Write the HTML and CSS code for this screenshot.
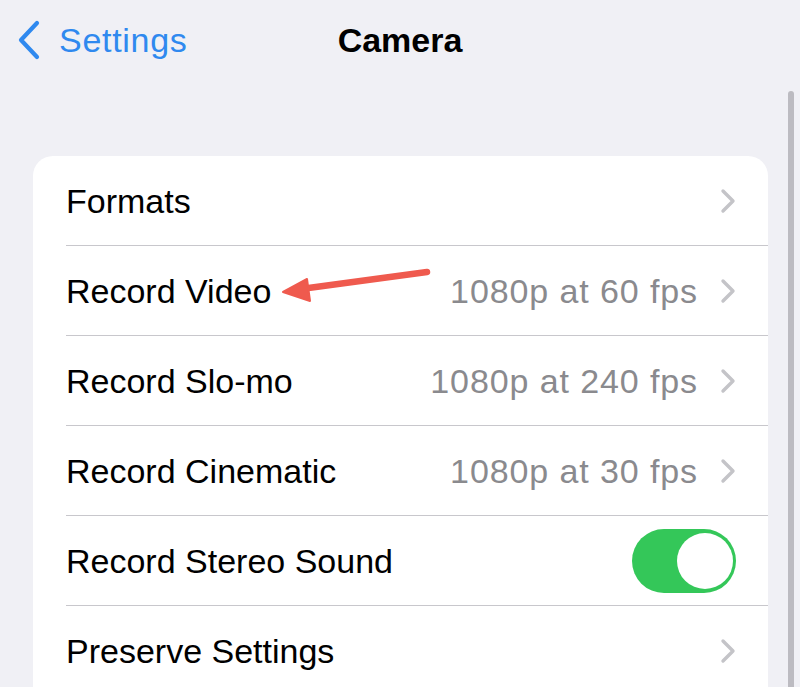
FILE: index.html
```html
<!DOCTYPE html>
<html>
<head>
<meta charset="utf-8">
<link rel="stylesheet" href="styles.css">
</head>
<body>
<div class="page">
  <header class="nav">
    <div class="back">
      <svg class="back-icon" width="26" height="40" viewBox="0 0 26 40"><path d="M21 3 L5 20 L21 37" fill="none" stroke="#2f89ef" stroke-width="4.2" stroke-linecap="round" stroke-linejoin="round"/></svg>
      <span class="back-label">Settings</span>
    </div>
    <div class="title">Camera</div>
  </header>
  <main class="card">
    <div class="row"><span class="label">Formats</span><span class="right"><svg class="chev" width="16" height="26" viewBox="0 0 16 26"><path d="M3 3 L13 13 L3 23" fill="none" stroke="#c4c4c8" stroke-width="3.4" stroke-linecap="round" stroke-linejoin="round"/></svg></span></div>
    <div class="row"><span class="label">Record Video</span><span class="right"><span class="value">1080p at 60 fps</span><svg class="chev" width="16" height="26" viewBox="0 0 16 26"><path d="M3 3 L13 13 L3 23" fill="none" stroke="#c4c4c8" stroke-width="3.4" stroke-linecap="round" stroke-linejoin="round"/></svg></span></div>
    <div class="row"><span class="label">Record Slo-mo</span><span class="right"><span class="value">1080p at 240 fps</span><svg class="chev" width="16" height="26" viewBox="0 0 16 26"><path d="M3 3 L13 13 L3 23" fill="none" stroke="#c4c4c8" stroke-width="3.4" stroke-linecap="round" stroke-linejoin="round"/></svg></span></div>
    <div class="row"><span class="label">Record Cinematic</span><span class="right"><span class="value">1080p at 30 fps</span><svg class="chev" width="16" height="26" viewBox="0 0 16 26"><path d="M3 3 L13 13 L3 23" fill="none" stroke="#c4c4c8" stroke-width="3.4" stroke-linecap="round" stroke-linejoin="round"/></svg></span></div>
    <div class="row"><span class="label">Record Stereo Sound</span><span class="right"><span class="toggle"><span class="knob"></span></span></span></div>
    <div class="row"><span class="label">Preserve Settings</span><span class="right"><svg class="chev" width="16" height="26" viewBox="0 0 16 26"><path d="M3 3 L13 13 L3 23" fill="none" stroke="#c4c4c8" stroke-width="3.4" stroke-linecap="round" stroke-linejoin="round"/></svg></span></div>
  </main>
  <div class="scrollbar"></div>
  <svg class="arrow" width="160" height="40" viewBox="0 0 160 40">
    <line x1="146" y1="6" x2="20" y2="23" stroke="#ef5a4e" stroke-width="6.5" stroke-linecap="round"/>
    <path d="M2 26 L26 13 L29 35 Z" fill="#ef5a4e" stroke="#ef5a4e" stroke-width="2" stroke-linejoin="round"/>
  </svg>
</div>
</body>
</html>
```
FILE: styles.css
```css
html, body {
  margin: 0;
  padding: 0;
  background: #f0f0f5;
  overflow: hidden;
}
.page {
  position: relative;
  width: 800px;
  height: 687px;
  font-family: "Liberation Sans", Arial, sans-serif;
  color: #000;
}
.nav {
  position: relative;
  height: 80px;
  display: flex;
  align-items: center;
  justify-content: center;
}
.back {
  position: absolute;
  left: 16px;
  top: 20px;
  display: flex;
  align-items: center;
  gap: 17px;
  color: #2f89ef;
}
.back-icon { display: block; }
.back-label {
  font-size: 34px;
  line-height: 40px;
  letter-spacing: 0.7px;
}
.title {
  font-size: 34px;
  font-weight: bold;
  line-height: 40px;
  margin-top: 0;
}
.card {
  margin: 76px 32px 0 33px;
  background: #fff;
  border-radius: 20px 20px 0 0;
  padding-left: 33px;
}
.row {
  height: 89px;
  display: flex;
  align-items: center;
  justify-content: space-between;
  border-top: 1px solid #c8c7cc;
  padding-right: 32px;
}
.row:first-child {
  border-top: none;
}
.label {
  font-size: 34px;
  padding-top: 2px;
}
.right {
  display: flex;
  align-items: center;
  gap: 22px;
}
.value {
  font-size: 34px;
  color: #8a8a8e;
  letter-spacing: 0.9px;
  padding-top: 2px;
}
.chev { display: block; }
.toggle {
  width: 104px;
  height: 64px;
  border-radius: 32px;
  background: #34c759;
  display: flex;
  align-items: center;
  justify-content: flex-end;
  padding: 0 3px;
  box-sizing: border-box;
}
.knob {
  width: 56px;
  height: 56px;
  border-radius: 50%;
  background: #fff;
}
.scrollbar {
  position: absolute;
  left: 788px;
  top: 91px;
  width: 6px;
  height: 620px;
  border-radius: 3px;
  background: #bcbbc1;
}
.arrow {
  position: absolute;
  left: 281px;
  top: 266px;
}
```
